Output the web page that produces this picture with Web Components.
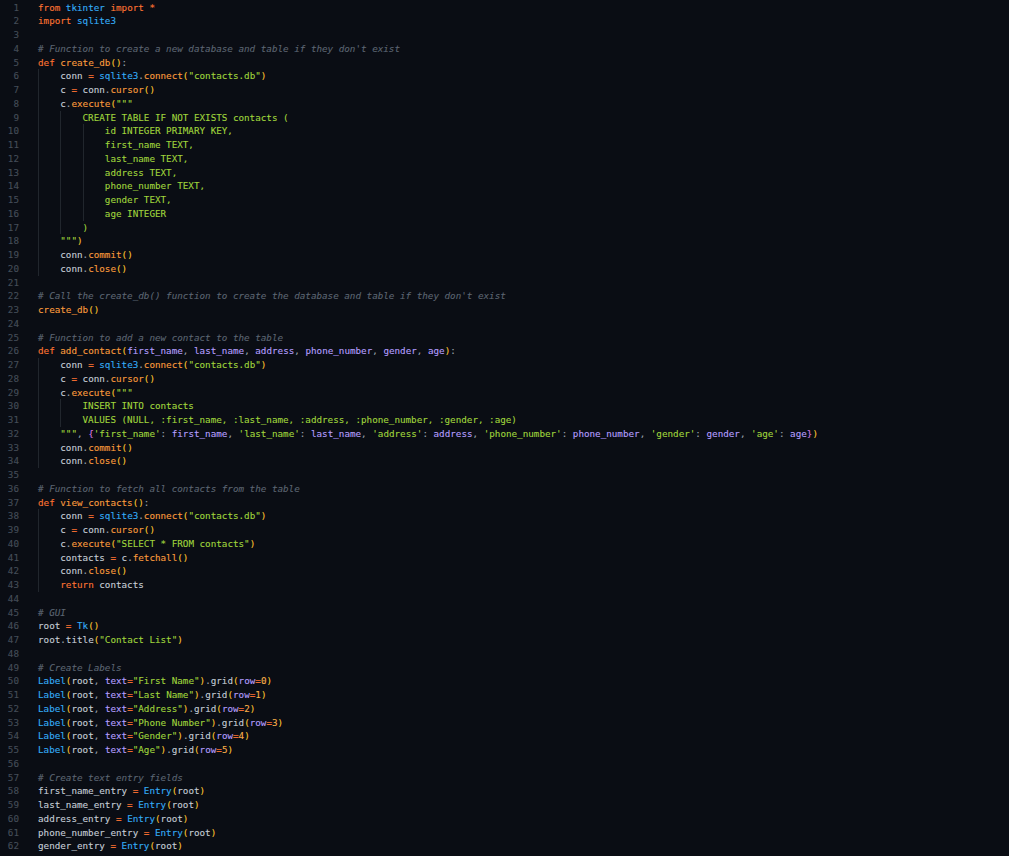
<!DOCTYPE html>
<html>
<head>
<meta charset="utf-8">
<title>code</title>
<style>
  html, body { margin: 0; padding: 0; background: #0a0d14; }
</style>
</head>
<body>
<code-view></code-view>

<script>
const SOURCE = `from tkinter import *
import sqlite3

# Function to create a new database and table if they don't exist
def create_db():
    conn = sqlite3.connect("contacts.db")
    c = conn.cursor()
    c.execute("""
        CREATE TABLE IF NOT EXISTS contacts (
            id INTEGER PRIMARY KEY,
            first_name TEXT,
            last_name TEXT,
            address TEXT,
            phone_number TEXT,
            gender TEXT,
            age INTEGER
        )
    """)
    conn.commit()
    conn.close()

# Call the create_db() function to create the database and table if they don't exist
create_db()

# Function to add a new contact to the table
def add_contact(first_name, last_name, address, phone_number, gender, age):
    conn = sqlite3.connect("contacts.db")
    c = conn.cursor()
    c.execute("""
        INSERT INTO contacts
        VALUES (NULL, :first_name, :last_name, :address, :phone_number, :gender, :age)
    """, {'first_name': first_name, 'last_name': last_name, 'address': address, 'phone_number': phone_number, 'gender': gender, 'age': age})
    conn.commit()
    conn.close()

# Function to fetch all contacts from the table
def view_contacts():
    conn = sqlite3.connect("contacts.db")
    c = conn.cursor()
    c.execute("SELECT * FROM contacts")
    contacts = c.fetchall()
    conn.close()
    return contacts

# GUI
root = Tk()
root.title("Contact List")

# Create Labels
Label(root, text="First Name").grid(row=0)
Label(root, text="Last Name").grid(row=1)
Label(root, text="Address").grid(row=2)
Label(root, text="Phone Number").grid(row=3)
Label(root, text="Gender").grid(row=4)
Label(root, text="Age").grid(row=5)

# Create text entry fields
first_name_entry = Entry(root)
last_name_entry = Entry(root)
address_entry = Entry(root)
phone_number_entry = Entry(root)
gender_entry = Entry(root)`;

const PARAMS = ['first_name', 'last_name', 'address', 'phone_number', 'gender', 'age'];

function esc(s) {
  return s.replace(/&/g, '&amp;').replace(/</g, '&lt;').replace(/>/g, '&gt;');
}

// rough python highlighter, keeps bracket depth and the open """ between lines
class Highlighter {
  constructor() {
    this.depth = 0;
    this.inDoc = false;
  }

  line(text) {
    let out = '';
    let rest = text;
    const isParamLine = /^def add_contact/.test(text) || /^\s*""", \{/.test(text);
    while (rest.length) {
      let m;
      if (this.inDoc) {
        const end = rest.indexOf('"""');
        if (end < 0) { out += `<span class="str">${esc(rest)}</span>`; break; }
        out += `<span class="str">${esc(rest.slice(0, end))}"""</span>`;
        rest = rest.slice(end + 3);
        this.inDoc = false;
        continue;
      }
      if ((m = rest.match(/^\s+/))) { out += m[0]; }
      else if ((m = rest.match(/^#.*/))) { out += `<span class="com">${esc(m[0])}</span>`; }
      else if (rest.startsWith('"""')) {
        m = ['"""'];
        this.inDoc = true;
        out += '<span class="str">"""</span>';
      }
      else if ((m = rest.match(/^"[^"]*"|^'[^']*'/))) { out += `<span class="str">${esc(m[0])}</span>`; }
      else if ((m = rest.match(/^[()\[\]{}]/))) {
        if (/[)\]}]/.test(m[0])) this.depth--;
        out += `<span class="b${this.depth % 3}">${m[0]}</span>`;
        if (/[(\[{]/.test(m[0])) this.depth++;
      }
      else if ((m = rest.match(/^\d+/))) { out += `<span class="num">${m[0]}</span>`; }
      else if ((m = rest.match(/^[A-Za-z_]\w*/))) {
        out += this.word(m[0], rest.slice(m[0].length), out, isParamLine);
      }
      else if ((m = rest.match(/^[=*]/))) { out += `<span class="op">${m[0]}</span>`; }
      else { m = [rest[0]]; out += `<span class="pun">${esc(rest[0])}</span>`; }
      rest = rest.slice(m[0].length);
    }
    return out;
  }

  word(w, after, before, isParamLine) {
    if (/^(from|import|def|return)$/.test(w)) return `<span class="kw">${w}</span>`;
    if (/^(tkinter|sqlite3|Tk|Label|Entry)$/.test(w)) return `<span class="cls">${w}</span>`;
    if (/^(text|row)$/.test(w) && after[0] === '=') return `<span class="par">${w}</span>`;
    if (isParamLine && PARAMS.includes(w)) return `<span class="par">${w}</span>`;
    if (w === 'grid' || w === 'title') return w;
    if (after[0] === '(') return `<span class="fn">${w}</span>`;
    return w;
  }
}

class CodeLine extends HTMLElement {
  constructor() {
    super();
    this.attachShadow({ mode: 'open' });
  }

  connectedCallback() {
    const indent = Number(this.getAttribute('data-guides') || 0);
    let guides = '';
    for (let i = 0; i < indent; i++) {
      guides += `<i style="left:${i * 4}ch"></i>`;
    }
    this.shadowRoot.innerHTML = `
      <style>
        :host { display: flex; height: var(--row); line-height: var(--row); white-space: pre; -webkit-text-stroke: 0.1px; }
        .no { width: 19px; text-align: right; color: #454d59; flex: none; }
        .code { position: relative; margin-left: 19px; color: #c6cdd7; }
        i { position: absolute; top: 0; bottom: 0; width: 1px; background: #21262d; }
        .kw { color: #ff7433; }
        .fn { color: #fb9c3c; }
        .cls { color: #35aef8; }
        .str { color: #a0d63c; }
        .par { color: #b59fff; }
        .op { color: #ff7433; }
        .num { color: #f8b04a; }
        .pun { color: #98a1ac; }
        .com { color: #5c6572; font-style: italic; }
        .b0 { color: #fbc52f; }
        .b1 { color: #d97ae0; }
        .b2 { color: #35aef8; }
      </style>
      <span class="no">${this.getAttribute('data-no')}</span><span class="code">${guides}<span id="text"></span></span>`;
    this.shadowRoot.getElementById('text').innerHTML = this.html || '';
  }
}

class CodeView extends HTMLElement {
  constructor() {
    super();
    this.attachShadow({ mode: 'open' });
  }

  connectedCallback() {
    this.shadowRoot.innerHTML = `
      <style>
        :host {
          display: block; height: 856px; overflow: hidden; box-sizing: border-box;
          padding-top: 0.5px; background: #0a0d14;
          font: 9.25px "DejaVu Sans Mono", monospace; --row: 13.75px;
        }
      </style>
      <div id="rows"></div>`;
    const rows = this.shadowRoot.getElementById('rows');
    const h = new Highlighter();
    const lines = SOURCE.split('\n');
    lines.forEach((text, i) => {
      const el = document.createElement('code-line');
      el.setAttribute('data-no', i + 1);
      el.setAttribute('data-guides', this.guides(lines[i]));
      el.html = h.line(text);
      rows.appendChild(el);
    });
  }

  // one guide per indent level, blank lines get none
  guides(text) {
    return text.trim() ? Math.floor(text.match(/^ */)[0].length / 4) : 0;
  }
}

customElements.define('code-line', CodeLine);
customElements.define('code-view', CodeView);
</script>
</body>
</html>
